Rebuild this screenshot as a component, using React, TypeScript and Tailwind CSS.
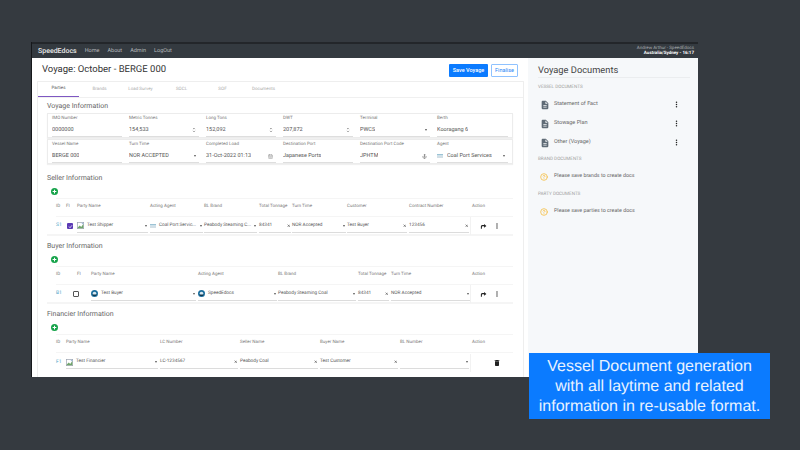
import { Anchor, CalendarDays, ChevronDown, ChevronUp, CircleHelp, Plus, X } from "lucide-react";
import type { ReactNode } from "react";

const FONT = "font-['Roboto',sans-serif] [text-rendering:geometricPrecision] antialiased";

type Kind = "text" | "number" | "select" | "clear";

type Field = { label: string; value: string; kind?: Kind; icon?: ReactNode; right?: ReactNode };

function BrokenImage() {
  return (
    <svg viewBox="0 0 10 10" className="h-[7px] w-[7px] shrink-0">
      <rect x="0.5" y="0.5" width="9" height="9" fill="#fff" stroke="#9ca3af" />
      <path d="M1 8 L4 5 L6 7 L9 3 V9 H1 Z" fill="#6fa56a" />
      <path d="M6 1 L9 1 L9 4 Z" fill="#9ab7d8" />
    </svg>
  );
}

function AgentLogo() {
  return (
    <svg viewBox="0 0 12 8" className="h-[4px] w-[6px] shrink-0">
      <rect width="12" height="3" fill="#9cc3d5" />
      <rect y="4" width="12" height="1.5" fill="#c5d5de" />
      <rect y="6.5" width="12" height="1.5" fill="#c5d5de" />
    </svg>
  );
}

function RoundLogo() {
  return (
    <svg viewBox="0 0 10 10" className="h-[7px] w-[7px] shrink-0">
      <circle cx="5" cy="5" r="5" fill="#1c6f9e" />
      <circle cx="5" cy="5" r="2.6" fill="#d8e7ef" />
      <path d="M2 6.5 H8 L7 8.5 H3 Z" fill="#12384f" />
    </svg>
  );
}

function Kebab({ className }: { className: string }) {
  return (
    <svg viewBox="0 0 24 24" className={className} fill="currentColor">
      <path d="M12 8a2 2 0 1 0 0-4 2 2 0 0 0 0 4zm0 2a2 2 0 1 0 0 4 2 2 0 0 0 0-4zm0 6a2 2 0 1 0 0 4 2 2 0 0 0 0-4z" />
    </svg>
  );
}

function Caret() {
  return <span className="ml-auto h-0 w-0 shrink-0 border-x-[1.5px] border-t-[2px] border-x-transparent border-t-[#555]" />;
}

function Spin() {
  return (
    <span className="ml-auto flex shrink-0 flex-col text-[#666]">
      <ChevronUp className="h-[3px] w-[4px]" strokeWidth={5} />
      <ChevronDown className="h-[3px] w-[4px]" strokeWidth={5} />
    </span>
  );
}

function InfoCell({ label, value, kind, icon, right }: Field) {
  return (
    <div className="flex flex-col pl-[3px]">
      <div className="flex h-[10px] items-center pt-[1px] text-[4.5px] text-[#777]">{label}</div>
      <div className="mr-[4px] flex h-[13px] items-center gap-[4px] border-b border-[#dedede] pr-[3px] text-[5.5px] text-[#555]">
        {icon}
        <span className="truncate">{value}</span>
        {kind === "number" && <Spin />}
        {kind === "select" && <Caret />}
        {right}
      </div>
    </div>
  );
}

function InfoRow({ fields }: { fields: Field[] }) {
  return (
    <div className="grid h-[25px] grid-cols-[77px_77px_77px_77px_77px_1fr] border border-[#ececec] pl-[1px] shadow-[0_1px_1px_rgba(0,0,0,0.06)]">
      {fields.map((f) => (
        <InfoCell key={f.label} {...f} />
      ))}
    </div>
  );
}

function Heading({ children }: { children: ReactNode }) {
  return <div className="h-[14px] pl-[9px] text-[7px] leading-[14px] text-[#666]">{children}</div>;
}

function AddButton() {
  return (
    <div className="flex h-[13px] items-center pl-[13px]">
      <span className="flex h-[7px] w-[7px] items-center justify-center rounded-full bg-[#16a34a] text-white">
        <Plus className="h-[5px] w-[5px]" strokeWidth={5} />
      </span>
    </div>
  );
}

function Input({ value, kind = "select", icon, width }: { value: string; kind?: Kind; icon?: ReactNode; width: string }) {
  return (
    <div className={`flex h-[13px] items-center gap-[3px] border-b border-[#dcdcdc] pr-[1px] text-[4.7px] text-[#555] ${width}`}>
      {icon}
      <span className="whitespace-nowrap">{value}</span>
      {kind === "select" && <Caret />}
      {kind === "clear" && <X className="ml-auto h-[3.5px] w-[3.5px] shrink-0 text-[#444]" strokeWidth={4} />}
    </div>
  );
}

function Check({ on }: { on: boolean }) {
  return on ? (
    <span className="ml-[1px] flex h-[6px] w-[6px] shrink-0 items-center justify-center rounded-[1px] bg-[#5b3bb5]">
      <svg viewBox="0 0 10 10" className="h-[5px] w-[5px]">
        <path d="M2 5 L4 7.5 L8 2.5" fill="none" stroke="#fff" strokeWidth="1.4" />
      </svg>
    </span>
  ) : (
    <span className="-ml-[4px] h-[6px] w-[6px] shrink-0 rounded-[1px] border border-[#555]" />
  );
}

function ActionIcons() {
  return (
    <div className="-ml-[2px] flex h-[18px] w-[40px] items-center pl-[10px] text-[#222] shadow-[inset_1px_0_0_#f2f2f2]">
      <svg viewBox="0 0 24 24" className="h-[7px] w-[7px]" fill="currentColor">
        <path d="M22 10 L14 3 V7 H8 C4.5 7 3 9.5 3 13 V20 H6.5 V13 C6.5 11.5 7 11 8.5 11 H14 V16 Z" />
      </svg>
      <Kebab className="ml-[6px] h-[8px] w-[8px]" />
    </div>
  );
}

function TableHead({ cols, template }: { cols: string[]; template: string }) {
  return (
    <div className={`grid h-[19px] items-center border-t border-b border-[#f5f5f5] text-[4.5px] text-[#777] ${template}`}>
      {cols.map((c, i) => (
        <span key={i} className="whitespace-nowrap">
          {c}
        </span>
      ))}
    </div>
  );
}

function RowId({ children }: { children: ReactNode }) {
  return <span className="text-[5px] text-[#4aa3c7]">{children}</span>;
}

function DocSection({ children }: { children: ReactNode }) {
  return <div className="flex h-[15px] items-center pt-[1px] text-[4.6px] uppercase text-[#a0a0a0]">{children}</div>;
}

function DocItem({ name }: { name: string }) {
  return (
    <div className="flex h-[19px] items-center pl-[2px] pr-[9px] text-[5.5px] text-[#666]">
      <svg viewBox="0 0 24 24" className="mr-[4px] h-[10px] w-[10px] shrink-0 text-[#5f6b76]" fill="currentColor">
        <path d="M14 2H6c-1.1 0-2 .9-2 2v16c0 1.1.9 2 2 2h12c1.1 0 2-.9 2-2V8l-6-6zm2 16H8v-2h8v2zm0-4H8v-2h8v2zm-3-5V3.5L18.5 9H13z" />
      </svg>
      <span>{name}</span>
      <Kebab className="ml-auto h-[9px] w-[9px] text-[#222]" />
    </div>
  );
}

function DocHint({ text }: { text: string }) {
  return (
    <div className="flex h-[20px] items-center pl-[2px] text-[5.3px] text-[#666]">
      <CircleHelp className="mr-[6px] h-[8px] w-[8px] text-[#f5c04a]" strokeWidth={2.5} />
      {text}
    </div>
  );
}

const TABS = ["Parties", "Brands", "Load Survey", "SOCL", "SOF", "Documents"];

const ROW_ONE: Field[] = [
  { label: "IMO Number", value: "0000000" },
  { label: "Metric Tonnes", value: "154,533", kind: "number" },
  { label: "Long Tons", value: "152,092", kind: "number" },
  { label: "DWT", value: "207,872", kind: "number" },
  { label: "Terminal", value: "PWCS", kind: "select" },
  { label: "Berth", value: "Kooragang 6" },
];

const ROW_TWO: Field[] = [
  { label: "Vessel Name", value: "BERGE 000" },
  { label: "Turn Time", value: "NOR ACCEPTED", kind: "select" },
  { label: "Completed Load", value: "31-Oct-2022 01:13", right: <CalendarDays className="ml-auto h-[5px] w-[5px] text-[#888]" /> },
  { label: "Destination Port", value: "Japanese Ports" },
  { label: "Destination Port Code", value: "JPHTM", right: <Anchor className="ml-auto h-[5px] w-[5px] text-[#555]" /> },
  { label: "Agent", value: "Coal Port Services", kind: "select", icon: <AgentLogo /> },
];

const SELLER = "grid-cols-[10px_11px_73px_54px_55px_33px_55px_62px_63px_1fr]";
const BUYER = "grid-cols-[21px_14px_107px_80px_80px_33px_81px_1fr]";
const FINANCE = "grid-cols-[10px_94px_80px_80px_80px_72px_1fr]";

export default function App() {
  return (
    <div className={`relative h-[450px] w-[800px] overflow-hidden bg-[#353a40] pl-[31px] pt-[42px] ${FONT}`}>
      <div className="w-[667px] border-l border-[#16181b]">
        <nav className="flex h-[16px] items-center border-t-[2px] border-[#23262a] bg-[#343a40] pl-[6px] pr-[4px]">
          <span className="mr-[8px] text-[7px] font-medium text-[#e6e6e6]">SpeedEdocs</span>
          <div className="flex gap-[8px] text-[5.5px] text-[#b5b8bb]">
            <span>Home</span>
            <span>About</span>
            <span>Admin</span>
            <span>LogOut</span>
          </div>
          <div className="ml-auto text-right text-[4.5px] leading-[5.5px] text-[#a9adb1]">
            <div>Andrew Arthur - SpeedEdocs</div>
            <div className="font-bold text-white">Australia/Sydney - 16:17</div>
          </div>
        </nav>
        <div className="flex h-[319px]">
          <main className="w-[496px] bg-white pl-[5px] pr-[4px]">
            <div className="flex h-[23px] items-center pl-[5px] pr-[6px] pt-[2px]">
              <h1 className="text-[9.5px] text-[#333]">Voyage: October - BERGE 000</h1>
              <button className="ml-auto h-[13px] w-[39px] rounded-[1px] bg-[#0b7bff] text-[5.5px] font-medium text-white">Save Voyage</button>
              <button className="ml-[3px] h-[13px] w-[27px] rounded-[1px] border border-[#8fc2ff] text-[5.5px] text-[#2a86f5]">Finalise</button>
            </div>
            <div className="h-[296px] rounded-t-[1px] border border-b-0 border-[#eeeeee]">
              <div className="flex h-[16px] border-b border-[#f0f0f0]">
                {TABS.map((t, i) => (
                  <span
                    key={t}
                    className={`flex w-[41px] items-center justify-center pt-[1px] text-[4.5px] ${i === 0 ? "border-b border-[#7e57c2] text-[#555]" : "text-[#aaa]"}`}
                  >
                    {t}
                  </span>
                ))}
              </div>
              <div className="pt-[2px]">
                <div className="h-[13px] pl-[9px] text-[7px] leading-[13px] text-[#666]">Voyage Information</div>
                <div className="ml-[9px] mr-[10px] flex flex-col gap-[1px]">
                  <InfoRow fields={ROW_ONE} />
                  <InfoRow fields={ROW_TWO} />
                </div>
              </div>
              <div className="pt-[7px]">
                <Heading>Seller Information</Heading>
                <AddButton />
                <div className="ml-[9px] mr-[10px] pl-[9px]">
                  <TableHead
                    template={SELLER}
                    cols={["ID", "FI", "Party Name", "Acting Agent", "BL Brand", "Total Tonnage", "Turn Time", "Customer", "Contract Number", "Action"]}
                  />
                </div>
                <div className={`ml-[9px] mr-[10px] grid h-[19px] items-center border-b-[2px] border-[#f5f5f5] pl-[9px] ${SELLER}`}>
                  <RowId>S1</RowId>
                  <Check on />
                  <Input width="w-[71px]" value="Test Shipper" icon={<BrokenImage />} />
                  <Input width="w-[53px]" value="Coal Port Servic..." icon={<AgentLogo />} />
                  <Input width="w-[53px]" value="Peabody Steaming C..." />
                  <Input width="w-[32px]" value="84341" kind="clear" />
                  <Input width="w-[54px]" value="NOR Accepted" />
                  <Input width="w-[60px]" value="Test Buyer" kind="clear" />
                  <Input width="w-[60px]" value="123456" kind="clear" />
                  <ActionIcons />
                </div>
              </div>
              <div className="pt-[3px]">
                <Heading>Buyer Information</Heading>
                <AddButton />
                <div className="ml-[9px] mr-[10px] pl-[9px]">
                  <TableHead template={BUYER} cols={["ID", "FI", "Party Name", "Acting Agent", "BL Brand", "Total Tonnage", "Turn Time", "Action"]} />
                </div>
                <div className={`ml-[9px] mr-[10px] grid h-[19px] items-center border-b-[2px] border-[#f5f5f5] pl-[9px] ${BUYER}`}>
                  <RowId>B1</RowId>
                  <Check on={false} />
                  <Input width="w-[105px]" value="Test Buyer" icon={<RoundLogo />} />
                  <Input width="w-[79px]" value="SpeedEdocs" icon={<RoundLogo />} />
                  <Input width="w-[78px]" value="Peabody Steaming Coal" />
                  <Input width="w-[31px]" value="84341" kind="clear" />
                  <Input width="w-[79px]" value="NOR Accepted" />
                  <ActionIcons />
                </div>
              </div>
              <div className="pt-[3px]">
                <Heading>Financier Information</Heading>
                <AddButton />
                <div className="ml-[9px] mr-[10px] pl-[9px]">
                  <TableHead template={FINANCE} cols={["ID", "Party Name", "LC Number", "Seller Name", "Buyer Name", "BL Number", "Action"]} />
                </div>
                <div className={`ml-[9px] mr-[10px] grid h-[19px] items-center pl-[9px] ${FINANCE}`}>
                  <RowId>F1</RowId>
                  <Input width="w-[92px]" value="Test Financier" icon={<BrokenImage />} />
                  <Input width="w-[78px]" value="LC-1234567" kind="clear" />
                  <Input width="w-[78px]" value="Peabody Coal" kind="clear" />
                  <Input width="w-[78px]" value="Test Customer" kind="clear" />
                  <Input width="w-[69px]" value="" />
                  <div className="-ml-[2px] flex h-[18px] w-[40px] items-center pl-[23px] text-[#222] shadow-[inset_1px_0_0_#f2f2f2]">
                    <svg viewBox="0 0 24 24" className="h-[8px] w-[8px]" fill="currentColor">
                      <path d="M6 19c0 1.1.9 2 2 2h8c1.1 0 2-.9 2-2V7H6v12zM19 4h-3.5l-1-1h-5l-1 1H5v2h14V4z" />
                    </svg>
                  </div>
                </div>
              </div>
            </div>
          </main>
          <aside className="flex-1 bg-[#f6f8fa] pl-[10px] pr-[8px] pt-[6px]">
            <div className="mb-[2px] h-[14px] border-b border-[#ebedef] text-[9.3px] leading-[13px] text-[#444]">Voyage Documents</div>
            <DocSection>Vessel Documents</DocSection>
            <DocItem name="Statement of Fact" />
            <DocItem name="Stowage Plan" />
            <DocItem name="Other (Voyage)" />
            <DocSection>Brand Documents</DocSection>
            <DocHint text="Please save brands to create docs" />
            <DocSection>Party Documents</DocSection>
            <DocHint text="Please save parties to create docs" />
          </aside>
        </div>
      </div>
      <div className="absolute left-[529px] top-[353px] flex h-[66px] w-[241px] items-center justify-center bg-[#0b7bff] pt-[2px] text-center font-['Liberation_Sans',sans-serif] text-[16px] leading-[20px] text-[#e8f2ff]">
        <span>
          Vessel Document generation
          <br />
          with all laytime and related
          <br />
          information in re-usable format.
        </span>
      </div>
    </div>
  );
}
